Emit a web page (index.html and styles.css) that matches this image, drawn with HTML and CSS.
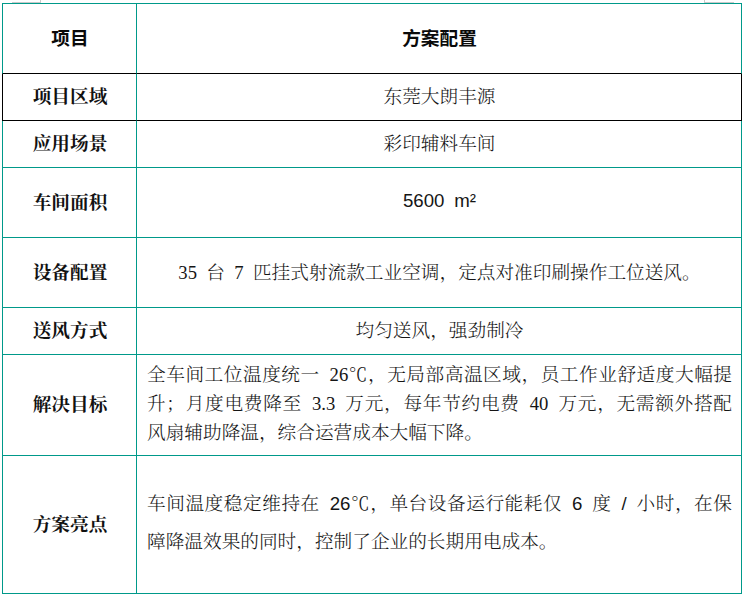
FILE: index.html
```html
<!DOCTYPE html>
<html lang="zh-CN">
<head>
<meta charset="utf-8">
<title>方案配置</title>
<link rel="stylesheet" href="styles.css">
</head>
<body>
<div class="page">
  <span class="mark mark-left"></span>
  <span class="mark mark-right"></span>
  <table class="spec">
    <colgroup><col class="col-label"><col class="col-value"></colgroup>
    <tr class="row-head">
      <th class="head">项目</th>
      <th class="head">方案配置</th>
    </tr>
    <tr class="row-s row-dark">
      <td class="label">项目区域</td>
      <td class="value">东莞大朗丰源</td>
    </tr>
    <tr class="row-s">
      <td class="label">应用场景</td>
      <td class="value">彩印辅料车间</td>
    </tr>
    <tr class="row-m">
      <td class="label">车间面积</td>
      <td class="value"><span class="sans">5600 m²</span></td>
    </tr>
    <tr class="row-m">
      <td class="label">设备配置</td>
      <td class="value">35 台 7 匹挂式射流款工业空调，定点对准印刷操作工位送风。</td>
    </tr>
    <tr class="row-s">
      <td class="label">送风方式</td>
      <td class="value">均匀送风，强劲制冷</td>
    </tr>
    <tr class="row-goal">
      <td class="label">解决目标</td>
      <td class="value para para-goal">
        <span class="ln">全车间工位温度统一 26℃，无局部高温区域，员工作业舒适度大幅提</span>
        <span class="ln">升；月度电费降至 3.3 万元，每年节约电费 40 万元，无需额外搭配</span>
        <span class="ln ln-last">风扇辅助降温，综合运营成本大幅下降。</span>
      </td>
    </tr>
    <tr class="row-hl">
      <td class="label">方案亮点</td>
      <td class="value para para-hl">
        <span class="ln">车间温度稳定维持在 <span class="sans">26</span>℃，单台设备运行能耗仅 <span class="sans">6</span> 度 <span class="sans">/</span> 小时，在保</span>
        <span class="ln ln-last">障降温效果的同时，控制了企业的长期用电成本。</span>
      </td>
    </tr>
  </table>
</div>
</body>
</html>
```

FILE: styles.css
```css
html, body {
  margin: 0;
  padding: 0;
  background: #ffffff;
}

body {
  width: 749px;
  height: 597px;
  overflow: hidden;
  color: #151515;
  font-family: "Liberation Serif", "Noto Serif CJK SC", "Noto Sans CJK SC", serif;
  font-size: 18.67px;
}

.page {
  position: relative;
  padding: 3px 0 0 2px;
}

.mark {
  position: absolute;
  top: 0;
  height: 2px;
  border-bottom: 1px solid #c9c9c9;
}

.mark-left {
  left: 12px;
  width: 28px;
  border-right: 1px solid #c9c9c9;
}

.mark-right {
  left: 704px;
  width: 29px;
  border-left: 1px solid #c9c9c9;
}

.spec {
  width: 740px;
  table-layout: fixed;
  border-collapse: separate;
  border-spacing: 0;
  border-top: 1px solid #00998a;
}

.col-label { width: 135px; }
.col-value { width: 605px; }

.spec th,
.spec td {
  box-sizing: border-box;
  padding: 0 9px 4px 10px;
  border-right: 1px solid #00998a;
  border-bottom: 1px solid #00998a;
  text-align: center;
  vertical-align: middle;
  word-spacing: 0.25em;
}

.spec th:first-child,
.spec td:first-child {
  border-left: 1px solid #00998a;
}

.row-head th { height: 70px; border-bottom-color: #000; }
.row-s td { height: 47px; }
.row-m td { height: 70px; }
.row-goal td { height: 101px; }
.row-hl td { height: 138px; }

.row-dark td { border-bottom-color: #000; }
.row-dark td:first-child { border-left-color: #000; }
.row-dark td:last-child { border-right-color: #000; }

.head {
  font-family: "Noto Sans CJK SC", sans-serif;
  font-weight: 700;
  font-size: 18.67px;
  color: #0a0a0a;
}

.label {
  font-weight: 700;
  color: #111;
}

.value {
  font-weight: 300;
}

.sans {
  font-family: "Liberation Sans", "Noto Sans", sans-serif;
  font-weight: 400;
}

.para {
  text-align: justify;
}

.ln {
  display: block;
  text-align: justify;
  text-align-last: justify;
}

.ln-last {
  text-align-last: left;
}

.para-goal {
  line-height: 29px;
  padding-top: 6px;
  padding-bottom: 0;
}

.para-hl {
  line-height: 38px;
  padding-bottom: 26px;
}
```
